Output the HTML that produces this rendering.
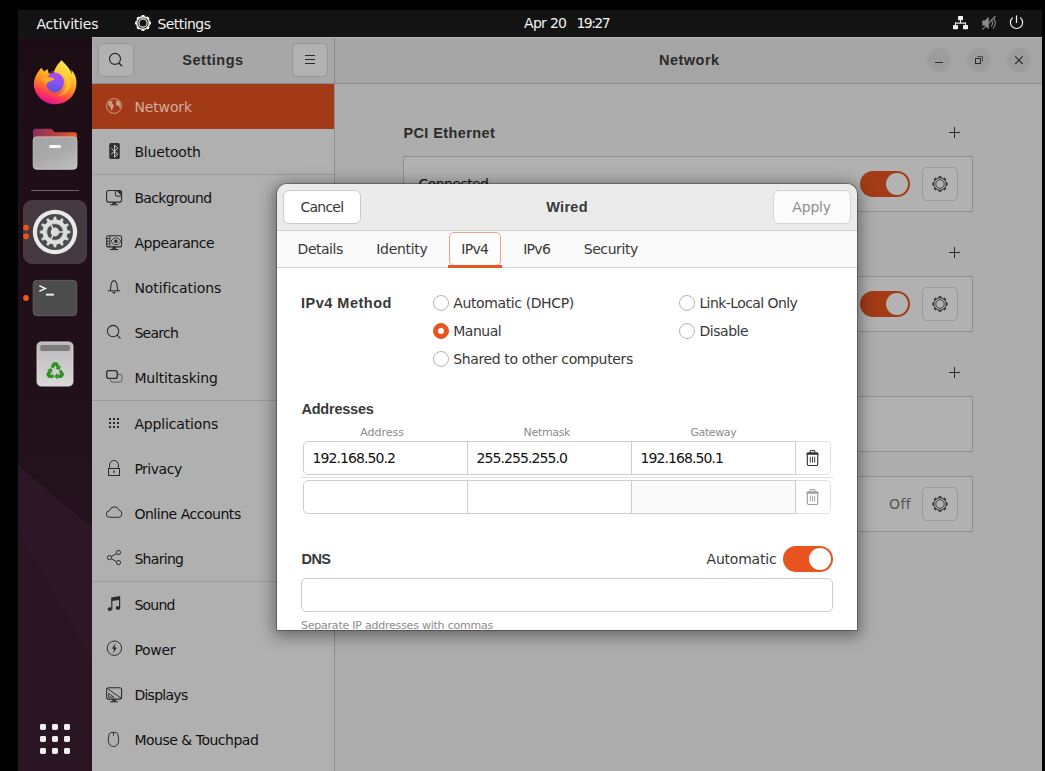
<!DOCTYPE html>
<html lang="en"><head><meta charset="utf-8"><title>Settings - Network</title>
<style>
.t{position:absolute;white-space:pre;line-height:1;font-family:"DejaVu Sans", "Liberation Sans", sans-serif;}
html,body{margin:0;padding:0;background:#000;}
body{width:1045px;height:771px;position:relative;overflow:hidden;font-family:"DejaVu Sans","Liberation Sans",sans-serif;}
.a{position:absolute;box-sizing:border-box;}
svg{position:absolute;overflow:visible;}
.topbar{left:18px;top:10px;width:1024px;height:27px;background:#131313;}
.dock{left:18px;top:37px;width:74px;height:734px;background:linear-gradient(180deg,#1c0d15 0%,#23111c 62%,#25121e 100%);}
.sbhead{left:92px;top:37px;width:242px;height:47px;background:#a7a7a7;border-bottom:1px solid #8b8b8b;}
.sidebar{left:92px;top:84px;width:242px;height:687px;background:#b0b0b0;}
.vdiv{left:334px;top:37px;width:1px;height:734px;background:linear-gradient(#878787 0,#878787 47px,#8f8f8f 47px);}
.mainhead{left:335px;top:37px;width:707px;height:47px;background:#a5a5a5;border-bottom:1px solid #8a8a8a;}
.content{left:335px;top:84px;width:707px;height:687px;background:#adadad;}
.sel{left:92px;top:84px;width:242px;height:45px;background:#a23a17;}
.sep{left:92px;width:242px;height:1px;background:#9c9c9c;}
.hbtn{background:#b2b2b2;border:1px solid #969696;border-radius:5px;}
.wbtn{width:24px;height:24px;border-radius:12px;background:#9d9d9d;top:48px;}
.box{left:403px;width:570px;height:56px;border:1px solid #909090;background:#b1b1b1;}
.gbtn{left:922px;width:36px;height:34px;border:1px solid #999;border-radius:5px;background:#b3b3b3;}
.sw{width:50px;height:26px;border-radius:13px;}
.sw.dim{background:#a33b16;left:860px;}
.sw i{position:absolute;right:2px;top:2px;width:22px;height:22px;border-radius:11px;}
.sw.dim i{background:#b3b3b3;}
.dialog{left:277px;top:184px;width:580px;height:446px;background:#fff;border-radius:10px 10px 0 0;box-shadow:0 3px 16px 3px rgba(0,0,0,.42),0 0 0 1px rgba(0,0,0,.28);overflow:hidden;}
.dhead{left:0;top:0;width:580px;height:47px;background:#ebebeb;border-bottom:1px solid #cfcfcf;}
.dtabs{left:0;top:47px;width:580px;height:37px;background:#fafafa;border-bottom:1px solid #d6d6d6;}
.dbtn{top:6px;height:34px;border:1px solid #c9c9c9;border-radius:6px;background:#fff;}
.tabsel{left:172px;top:48px;width:52px;height:34px;border:1px solid #f0a285;border-radius:5px;background:#fdfdfd;}
.tabline{left:171px;top:81px;width:54px;height:3px;background:#e95420;}
.radio{width:16px;height:16px;border-radius:8px;border:1px solid #b5b5b5;background:#fff;}
.radio.on{border-color:#e95420;background:#e95420;}
.radio.on:after{content:"";position:absolute;left:4.2px;top:4.2px;width:5.6px;height:5.6px;border-radius:3px;background:#fff;}
.entry{border:1px solid #cdcdcd;background:#fff;}
.dlgtext{left:0;top:0;width:1045px;height:630px;overflow:hidden;}
.hl{background:#b7b7b7;}
</style></head>
<body>
<div class="a topbar"></div>
<div class="a dock"></div>
<div class="a sbhead"></div>
<div class="a sidebar"></div>
<div class="a mainhead"></div>
<div class="a content"></div>
<div class="a vdiv"></div>
<div class="a hl" style="left:92px;top:37px;width:950px;height:1px"></div>
<div class="a" style="left:92px;top:38px;width:1px;height:45px;background:#aeaeae"></div>
<div class="a sel"></div>
<div class="a sep" style="top:174px"></div>
<div class="a sep" style="top:400px"></div>
<div class="a sep" style="top:581px"></div>
<div class="a hbtn" style="left:98px;top:43px;width:36px;height:34px"></div>
<div class="a hbtn" style="left:292px;top:43px;width:36px;height:34px"></div>
<div class="a wbtn" style="left:927px"></div>
<div class="a wbtn" style="left:967px"></div>
<div class="a wbtn" style="left:1007px"></div>
<div class="a box" style="top:156px"></div>
<div class="a box" style="top:276px"></div>
<div class="a box" style="top:396px"></div>
<div class="a box" style="top:476px"></div>
<div class="a gbtn" style="top:167px"></div>
<div class="a gbtn" style="top:287px"></div>
<div class="a gbtn" style="top:487px"></div>
<div class="a sw dim" style="top:171px"><i></i></div>
<div class="a sw dim" style="top:291px"><i></i></div>
<svg style="left:0;top:0" width="1045" height="771" viewBox="0 0 1045 771">
<defs>
<linearGradient id="ffg" x1="0.72" y1="0.05" x2="0.36" y2="1"><stop offset="0" stop-color="#fff36b"/><stop offset="0.28" stop-color="#ffc32e"/><stop offset="0.55" stop-color="#ff8a1f"/><stop offset="0.78" stop-color="#ff3f4f"/><stop offset="0.97" stop-color="#e7148f"/></linearGradient>
<linearGradient id="ffp" x1="0.6" y1="0" x2="0.4" y2="1"><stop offset="0" stop-color="#b545f0"/><stop offset="0.5" stop-color="#8a52f5"/><stop offset="1" stop-color="#5a55cc"/></linearGradient>
<linearGradient id="fob" x1="0" y1="0" x2="1" y2="0.25"><stop offset="0" stop-color="#8a2b5e"/><stop offset="0.55" stop-color="#b8403f"/><stop offset="1" stop-color="#e65f2b"/></linearGradient>
<linearGradient id="fof" x1="0.2" y1="0" x2="0.8" y2="1"><stop offset="0" stop-color="#a4a4a4"/><stop offset="0.5" stop-color="#a9a9a9"/><stop offset="1" stop-color="#bdbdbd"/></linearGradient>
<linearGradient id="trg" x1="0" y1="0" x2="0" y2="1"><stop offset="0" stop-color="#b9b9b9"/><stop offset="1" stop-color="#d9d9d9"/></linearGradient>
</defs>
<path d="M18,466L92,527V771H18z" fill="#2d1726"/><path d="M18,528L92,660V771H18z" fill="#2a1523"/>
<path d="M141.29,16.62 L141.73,15.00 L144.27,15.00 L144.71,16.62Z M146.30,17.28 L147.76,16.45 L149.55,18.24 L148.72,19.70Z M149.38,21.29 L151.00,21.73 L151.00,24.27 L149.38,24.71Z M148.72,26.30 L149.55,27.76 L147.76,29.55 L146.30,28.72Z M144.71,29.38 L144.27,31.00 L141.73,31.00 L141.29,29.38Z M139.70,28.72 L138.24,29.55 L136.45,27.76 L137.28,26.30Z M136.62,24.71 L135.00,24.27 L135.00,21.73 L136.62,21.29Z M137.28,19.70 L136.45,18.24 L138.24,16.45 L139.70,17.28Z " fill="#f4f4f4"/><circle cx="143" cy="23" r="6.3" fill="none" stroke="#f4f4f4" stroke-width="1.5"/><circle cx="143" cy="23" r="4.1" fill="none" stroke="#f4f4f4" stroke-width="1.1"/>
<g fill="#f6f6f6"><rect x="958" y="16" width="5" height="4.2" rx="0.6"/><rect x="953" y="25" width="5" height="4.2" rx="0.6"/><rect x="963" y="25" width="5" height="4.2" rx="0.6"/></g>
<path d="M960.5,20v3M955.5,25.2v-2.600M965.500,25.200v-2.600" stroke="#f6f6f6" stroke-width="1" fill="none"/><rect x="955" y="22.500" width="11" height="1.200" fill="#f6f6f6"/>
<g fill="#8a8a8a"><path d="M982.3,20.4h2.6l3.9,-3.7v12.6l-3.9,-3.7h-2.6z"/></g>
<path d="M991,19.6a4.6,4.6 0 0 1 0,6.8M993,17.6a7.6,7.6 0 0 1 0,10.8" stroke="#8a8a8a" stroke-width="1.1" fill="none"/>
<path d="M982.3,29.6L995.6,16.2" stroke="#8a8a8a" stroke-width="1.1" fill="none"/>
<path d="M1012.400,17.900a6.100,6.100 0 1 0 8.200,0" stroke="#f4f4f4" stroke-width="1.200" fill="none" stroke-linecap="round"/><path d="M1016.500,15.800v6.600" stroke="#f4f4f4" stroke-width="1.200" stroke-linecap="round"/>
<g transform="translate(25,50) scale(0.07782)">
<path d="M212,228 C175,270 118,340 114,430 C110,565 230,696 385,696 C545,696 664,572 661,420 C659,340 632,292 590,255 C600,275 603,292 600,308 C582,242 522,190 470,133 C438,170 395,215 376,274 L372,296 L330,308 L300,294 C300,276 296,260 290,243 C275,254 260,266 246,276 C232,262 220,246 212,228 Z" fill="url(#ffg)"/>
<ellipse cx="385" cy="416" rx="116" ry="130" fill="url(#ffp)"/>
<path d="M188,376 C225,338 305,328 388,372 C345,398 292,400 266,452 C262,420 232,392 188,376Z" fill="#ffa52a"/>
<path d="M300,294 C340,280 400,280 440,310 C470,330 490,345 498,345 C485,318 455,300 420,292 C470,290 520,330 530,400 C545,470 500,560 420,590 C520,590 600,500 590,400 C580,320 520,250 470,133 C438,170 395,215 376,274 C350,276 320,284 300,294Z" fill="#ffd23a" opacity="0.55"/>
</g>
<path d="M33,136v-4.2a3,3 0 0 1 3,-3h14.6a2,2 0 0 1 1.5,0.7l1.9,2a2,2 0 0 0 1.5,0.7h18.5a3,3 0 0 1 3,3v10h-44z" fill="url(#fob)"/>
<rect x="33.2" y="136.9" width="43.8" height="32.4" rx="3.6" fill="url(#fof)" stroke="#d2d2d2" stroke-width="0.8"/>
<rect x="49" y="145.1" width="12" height="3" rx="1.5" fill="#fafafa"/>
<rect x="31" y="190" width="48" height="1" fill="#6e646b"/>
<rect x="23" y="200" width="64" height="64" rx="9" fill="#463a41"/>
<circle cx="55" cy="232" r="22.2" fill="#e9e9e9"/><circle cx="55" cy="232" r="18" fill="#4b4b4b"/>
<path d="M53.72,219.87 L54.14,217.02 L55.86,217.02 L56.28,219.87 L59.96,220.85 L61.74,218.60 L63.24,219.46 L62.17,222.13 L64.87,224.83 L67.54,223.76 L68.40,225.26 L66.15,227.04 L67.13,230.72 L69.98,231.14 L69.98,232.86 L67.13,233.28 L66.15,236.96 L68.40,238.74 L67.54,240.24 L64.87,239.17 L62.17,241.87 L63.24,244.54 L61.74,245.40 L59.96,243.15 L56.28,244.13 L55.86,246.98 L54.14,246.98 L53.72,244.13 L50.04,243.15 L48.26,245.40 L46.76,244.54 L47.83,241.87 L45.13,239.17 L42.46,240.24 L41.60,238.74 L43.85,236.96 L42.87,233.28 L40.02,232.86 L40.02,231.14 L42.87,230.72 L43.85,227.04 L41.60,225.26 L42.46,223.76 L45.13,224.83 L47.83,222.13 L46.76,219.46 L48.26,218.60 L50.04,220.85Z M46.60,232.00 a8.4,8.4 0 1,0 16.8,0 a8.4,8.4 0 1,0 -16.8,0Z" fill="#dedede" fill-rule="evenodd" stroke="#dedede" stroke-width="0.8" stroke-linejoin="round"/>
<circle cx="55" cy="232" r="4.4" fill="#dcdcdc"/>
<path d="M55,232h8.6M55,232l-4.3,-7.45M55,232l-4.3,7.45" stroke="#dcdcdc" stroke-width="1.6" fill="none"/>
<circle cx="26" cy="227.6" r="2.9" fill="#e95420"/><circle cx="26" cy="236.3" r="2.9" fill="#e95420"/>
<rect x="33.2" y="280.3" width="43.6" height="35.4" rx="4" fill="#4c4c4c" stroke="#686868" stroke-width="0.8"/>
<path d="M39.3,285.6l6,2.9l-6,2.9" stroke="#f3f3f3" stroke-width="1.5" fill="none"/><rect x="46" y="293.7" width="8" height="1.9" fill="#f3f3f3"/>
<circle cx="26" cy="298" r="2.9" fill="#e95420"/>
<rect x="37" y="341.9" width="36" height="44.2" rx="4.2" fill="url(#trg)" stroke="#e2e2e2" stroke-width="0.8"/>
<rect x="40.2" y="345.1" width="29.8" height="5.9" rx="1.8" fill="#7c7c7c"/>
<path d="M51.91,367.70L54.13,363.85L56.27,363.85L58.16,367.13" fill="none" stroke="#2f8f22" stroke-width="3.3" stroke-linejoin="round"/><path d="M55.39,368.73L59.86,370.07L60.93,365.53Z" fill="#2f8f22"/><path d="M60.14,370.55L62.36,374.40L61.29,376.25L57.50,376.25" fill="none" stroke="#2f8f22" stroke-width="3.3" stroke-linejoin="round"/><path d="M57.50,373.05L54.10,376.25L57.50,379.45Z" fill="#2f8f22"/><path d="M53.55,376.25L49.11,376.25L48.04,374.40L49.93,371.12" fill="none" stroke="#2f8f22" stroke-width="3.3" stroke-linejoin="round"/><path d="M52.71,372.72L51.63,368.18L47.16,369.52Z" fill="#2f8f22"/>
<rect x="40" y="724" width="6" height="6" rx="1.4" fill="#f1f0f0"/>
<rect x="52" y="724" width="6" height="6" rx="1.4" fill="#f1f0f0"/>
<rect x="64" y="724" width="6" height="6" rx="1.4" fill="#f1f0f0"/>
<rect x="40" y="736" width="6" height="6" rx="1.4" fill="#f1f0f0"/>
<rect x="52" y="736" width="6" height="6" rx="1.4" fill="#f1f0f0"/>
<rect x="64" y="736" width="6" height="6" rx="1.4" fill="#f1f0f0"/>
<rect x="40" y="748" width="6" height="6" rx="1.4" fill="#f1f0f0"/>
<rect x="52" y="748" width="6" height="6" rx="1.4" fill="#f1f0f0"/>
<rect x="64" y="748" width="6" height="6" rx="1.4" fill="#f1f0f0"/>
<circle cx="115" cy="58.9" r="5.5" fill="none" stroke="#2b2b2b" stroke-width="1.15"/><path d="M118.9,63l3.3,3.2" stroke="#2b2b2b" stroke-width="1.5"/>
<path d="M305,55.5h10M305,59.5h10M305,63.5h10" stroke="#2b2b2b" stroke-width="1"/>
<path d="M935,62.5h8" stroke="#2b2b2b" stroke-width="1"/>
<rect x="975.5" y="58.5" width="5" height="5" fill="none" stroke="#2b2b2b" stroke-width="1"/><path d="M977.5,56.5h5v5" fill="none" stroke="#4a4a4a" stroke-width="1"/>
<path d="M1015.2,56.4l7.6,7.6M1022.8,56.4l-7.6,7.6" stroke="#2b2b2b" stroke-width="1.1"/>
<path d="M949.0,132.5h11M954.5,127.0v11" stroke="#262626" stroke-width="1" fill="none"/>
<path d="M949.0,252.5h11M954.5,247.0v11" stroke="#262626" stroke-width="1" fill="none"/>
<path d="M949.0,372.5h11M954.5,367.0v11" stroke="#262626" stroke-width="1" fill="none"/>
<path d="M938.21,177.75 L938.65,176.32 L941.35,176.32 L941.79,177.75Z M943.15,178.31 L944.47,177.61 L946.39,179.53 L945.69,180.85Z M946.25,182.21 L947.68,182.65 L947.68,185.35 L946.25,185.79Z M945.69,187.15 L946.39,188.47 L944.47,190.39 L943.15,189.69Z M941.79,190.25 L941.35,191.68 L938.65,191.68 L938.21,190.25Z M936.85,189.69 L935.53,190.39 L933.61,188.47 L934.31,187.15Z M933.75,185.79 L932.32,185.35 L932.32,182.65 L933.75,182.21Z M934.31,180.85 L933.61,179.53 L935.53,177.61 L936.85,178.31Z " fill="#2d2d2d"/><circle cx="940" cy="184" r="6.2" fill="none" stroke="#2d2d2d" stroke-width="1.0"/><circle cx="940" cy="184" r="4.2" fill="none" stroke="#2d2d2d" stroke-width="0.9"/>
<path d="M938.21,297.75 L938.65,296.32 L941.35,296.32 L941.79,297.75Z M943.15,298.31 L944.47,297.61 L946.39,299.53 L945.69,300.85Z M946.25,302.21 L947.68,302.65 L947.68,305.35 L946.25,305.79Z M945.69,307.15 L946.39,308.47 L944.47,310.39 L943.15,309.69Z M941.79,310.25 L941.35,311.68 L938.65,311.68 L938.21,310.25Z M936.85,309.69 L935.53,310.39 L933.61,308.47 L934.31,307.15Z M933.75,305.79 L932.32,305.35 L932.32,302.65 L933.75,302.21Z M934.31,300.85 L933.61,299.53 L935.53,297.61 L936.85,298.31Z " fill="#2d2d2d"/><circle cx="940" cy="304" r="6.2" fill="none" stroke="#2d2d2d" stroke-width="1.0"/><circle cx="940" cy="304" r="4.2" fill="none" stroke="#2d2d2d" stroke-width="0.9"/>
<path d="M938.21,497.75 L938.65,496.32 L941.35,496.32 L941.79,497.75Z M943.15,498.31 L944.47,497.61 L946.39,499.53 L945.69,500.85Z M946.25,502.21 L947.68,502.65 L947.68,505.35 L946.25,505.79Z M945.69,507.15 L946.39,508.47 L944.47,510.39 L943.15,509.69Z M941.79,510.25 L941.35,511.68 L938.65,511.68 L938.21,510.25Z M936.85,509.69 L935.53,510.39 L933.61,508.47 L934.31,507.15Z M933.75,505.79 L932.32,505.35 L932.32,502.65 L933.75,502.21Z M934.31,500.85 L933.61,499.53 L935.53,497.61 L936.85,498.31Z " fill="#2d2d2d"/><circle cx="940" cy="504" r="6.2" fill="none" stroke="#2d2d2d" stroke-width="1.0"/><circle cx="940" cy="504" r="4.2" fill="none" stroke="#2d2d2d" stroke-width="0.9"/>
<circle cx="114" cy="106" r="7.4" fill="none" stroke="#cb9c8c" stroke-width="1"/>
<path d="M109.3,101.2c1.2,-0.6 2.6,-0.2 3.4,0.5c-0.3,0.9 -1,1.2 -1.6,1.6c0.9,0.4 2.4,1 2.8,2.2c0.3,1.2 -0.9,2 -1.3,3c-0.3,0.9 -0.2,2 -0.9,2.6c-0.8,-1 -0.9,-2.6 -1.3,-3.8c-0.4,-1.2 -1.9,-1.6 -2.1,-2.8c-0.2,-1.4 0.3,-2.5 1,-3.300z M116.400,100.100c1.600,0.300 3.100,1.600 3.900,3.200c0.400,1.600 0.400,3.600 -0.300,5.100c-0.600,-0.900 -0.600,-2.200 -1.400,-2.900c-0.900,-0.500 -1.900,0.100 -2.600,-0.800c-0.600,-0.900 0.200,-1.700 0.500,-2.500c0.200,-0.700 -0.300,-1.400 -0.100,-2.100z" fill="#cb9c8c"/>
<rect x="109.2" y="143.1" width="10.6" height="16" rx="1.6" fill="#323232"/>
<path d="M111.300,148.200L117.700,154.200L114.600,157.200V145L117.700,148.200L111.300,154.200" stroke="#cfcfcf" stroke-width="1" fill="none" stroke-linejoin="miter"/>
<rect x="106.6" y="190.5" width="15" height="11.6" rx="2" fill="none" stroke="#2b2b2b" stroke-width="1.1"/><rect x="112.4" y="202.1" width="3.4" height="2.3" fill="#2b2b2b"/><rect x="110.2" y="204.2" width="7.8" height="1.1" fill="#2b2b2b"/>
<path d="M115.400,190.500v4.200a1.500,1.500 0 0 0 1.500,1.500h4.700" fill="none" stroke="#2b2b2b" stroke-width="1"/><path d="M116.6,191h3.400a1.400,1.400 0 0 1 1.400,1.400v3.100z" fill="#2b2b2b"/>
<rect x="106.6" y="235.7" width="15" height="11.2" rx="2" fill="none" stroke="#2b2b2b" stroke-width="1.1"/><rect x="112.4" y="246.89999999999998" width="3.4" height="2.3" fill="#2b2b2b"/><rect x="110.2" y="248.99999999999997" width="7.8" height="1.1" fill="#2b2b2b"/>
<path d="M109.9,235.800v11" stroke="#2b2b2b" stroke-width="0.9"/><path d="M107,238.500h2.900M107,241.200h2.900M107,243.900h2.900" stroke="#2b2b2b" stroke-width="0.9"/>
<path d="M110.900,241.300c1.600,-2.600 3.300,-3.400 5,-3.400s3.400,0.800 5,3.400c-1.600,2.600 -3.300,3.400 -5,3.400s-3.400,-0.800 -5,-3.400z" fill="none" stroke="#2b2b2b" stroke-width="0.9"/><circle cx="115.900" cy="241.300" r="1.700" fill="#2b2b2b"/>
<path d="M110.300,290.400c0.500,-2.200 0.300,-5.300 1.200,-7.500c0.500,-1.300 1.400,-2.300 2.500,-2.300s2,1 2.500,2.300c0.900,2.200 0.700,5.300 1.200,7.500" fill="none" stroke="#2b2b2b" stroke-width="1.1"/><path d="M107.900,290.800h12.200" stroke="#2b2b2b" stroke-width="1.1"/><path d="M112,292.100h4l-2,1.900z" fill="#2b2b2b"/>
<circle cx="113.100" cy="331.100" r="5.700" fill="none" stroke="#2b2b2b" stroke-width="1.1"/><path d="M117.200,335.200l3.300,3.400" stroke="#2b2b2b" stroke-width="1.2"/>
<path d="M117.800,374.300h2.200a2,2 0 0 1 2,2v3.800a2,2 0 0 1 -2,2h-7.600a2,2 0 0 1 -2,-2v-0.800" fill="none" stroke="#555" stroke-width="0.9"/>
<rect x="106.700" y="370.700" width="10.600" height="7.700" rx="2.200" fill="none" stroke="#2b2b2b" stroke-width="1.300"/>
<rect x="109" y="418" width="2" height="2" fill="#2b2b2b"/>
<rect x="113" y="418" width="2" height="2" fill="#2b2b2b"/>
<rect x="117" y="418" width="2" height="2" fill="#2b2b2b"/>
<rect x="109" y="422" width="2" height="2" fill="#2b2b2b"/>
<rect x="113" y="422" width="2" height="2" fill="#2b2b2b"/>
<rect x="117" y="422" width="2" height="2" fill="#2b2b2b"/>
<rect x="109" y="426" width="2" height="2" fill="#2b2b2b"/>
<rect x="113" y="426" width="2" height="2" fill="#2b2b2b"/>
<rect x="117" y="426" width="2" height="2" fill="#2b2b2b"/>
<rect x="108.500" y="468.500" width="11" height="7" fill="none" stroke="#2b2b2b" stroke-width="1"/><path d="M109.600,468.500v-3.600a4.400,4.400 0 0 1 8.800,0v3.600" fill="none" stroke="#2b2b2b" stroke-width="1"/><rect x="113.400" y="470.400" width="1.300" height="2.500" fill="#2b2b2b"/>
<path d="M109.800,517.300a3.300,3.300 0 0 1 -0.300,-6.600a5,5 0 0 1 9.600,-0.500a3.600,3.600 0 0 1 -0.500,7.100z" fill="none" stroke="#2b2b2b" stroke-width="1"/>
<circle cx="118.500" cy="552.500" r="2.100" fill="none" stroke="#2b2b2b" stroke-width="1"/><circle cx="109.400" cy="557.600" r="2.100" fill="none" stroke="#2b2b2b" stroke-width="1"/><circle cx="118.500" cy="562.600" r="2.100" fill="none" stroke="#2b2b2b" stroke-width="1"/><path d="M111.300,556.500l5.300,-3M111.300,558.700l5.300,3" stroke="#2b2b2b" stroke-width="1"/>
<path d="M111.200,597.500l9,-1.500v12h-1.200v-8.100l-6.600,1.100v8.300h-1.200z" fill="#2b2b2b"/><ellipse cx="109.800" cy="609.100" rx="2.200" ry="1.900" fill="#2b2b2b"/><ellipse cx="117.900" cy="607.900" rx="2.200" ry="1.900" fill="#2b2b2b"/>
<circle cx="114.400" cy="648.200" r="7.200" fill="none" stroke="#2b2b2b" stroke-width="1"/><path d="M115.500,643.300l-3.700,5.400h2.300l-0.900,4.500l3.700,-5.700h-2.300z" fill="#2b2b2b"/>
<rect x="106.6" y="687.8" width="15" height="11.3" rx="2" fill="none" stroke="#2b2b2b" stroke-width="1.1"/><rect x="112.4" y="699.0999999999999" width="3.4" height="2.3" fill="#2b2b2b"/><rect x="110.2" y="701.1999999999999" width="7.8" height="1.1" fill="#2b2b2b"/>
<path d="M107,688.200l14.300,10.200" stroke="#2b2b2b" stroke-width="1"/><path d="M108.700,693.300v3.800h5.200z" fill="none" stroke="#2b2b2b" stroke-width="0.9"/>
<path d="M113.500,732.300c2.300,0 3.900,0.300 4.200,1.500c0.700,2.800 1.200,5.400 0.900,7.700c-0.400,2.900 -2.400,5 -5.100,5s-4.700,-2.100 -5.100,-5c-0.300,-2.300 0.200,-4.900 0.900,-7.700c0.300,-1.200 1.900,-1.500 4.200,-1.500z" fill="none" stroke="#2b2b2b" stroke-width="1"/><path d="M113.500,732.500v3.300" stroke="#2b2b2b" stroke-width="1"/>
</svg>
<span class="t" style="left:36.5px;top:16.50px;font-size:14px;font-weight:400;color:#f2f2f2;letter-spacing:-0.208px;">Activities</span>
<span class="t" style="left:157.4px;top:16.50px;font-size:14px;font-weight:400;color:#f2f2f2;letter-spacing:-0.546px;">Settings</span>
<span class="t" style="left:524.1px;top:16.30px;font-size:14px;font-weight:400;color:#f2f2f2;letter-spacing:-0.717px;">Apr 20</span>
<span class="t" style="left:576.4px;top:16.30px;font-size:14px;font-weight:400;color:#f2f2f2;letter-spacing:-1.540px;">19:27</span>
<span class="t" style="left:182.3px;top:53.30px;font-size:14.5px;font-weight:700;color:#2b2b2b;letter-spacing:0.514px;font-family:'Liberation Sans','DejaVu Sans',sans-serif;">Settings</span>
<span class="t" style="left:658.9px;top:52.80px;font-size:14.5px;font-weight:700;color:#2b2b2b;letter-spacing:0.514px;font-family:'Liberation Sans','DejaVu Sans',sans-serif;">Network</span>
<span class="t" style="left:134.4px;top:99.60px;font-size:14px;font-weight:400;color:#d2ada0;letter-spacing:-0.128px;">Network</span>
<span class="t" style="left:134.4px;top:144.60px;font-size:14px;font-weight:400;color:#101010;letter-spacing:-0.184px;">Bluetooth</span>
<span class="t" style="left:134.4px;top:190.60px;font-size:14px;font-weight:400;color:#101010;letter-spacing:-0.637px;">Background</span>
<span class="t" style="left:134.4px;top:235.60px;font-size:14px;font-weight:400;color:#101010;letter-spacing:-0.418px;">Appearance</span>
<span class="t" style="left:134.4px;top:280.60px;font-size:14px;font-weight:400;color:#101010;letter-spacing:-0.052px;">Notifications</span>
<span class="t" style="left:134.4px;top:325.60px;font-size:14px;font-weight:400;color:#101010;letter-spacing:-0.722px;">Search</span>
<span class="t" style="left:134.4px;top:370.60px;font-size:14px;font-weight:400;color:#101010;letter-spacing:-0.168px;">Multitasking</span>
<span class="t" style="left:134.4px;top:416.60px;font-size:14px;font-weight:400;color:#101010;letter-spacing:-0.157px;">Applications</span>
<span class="t" style="left:134.4px;top:461.60px;font-size:14px;font-weight:400;color:#101010;letter-spacing:-0.484px;">Privacy</span>
<span class="t" style="left:134.4px;top:506.60px;font-size:14px;font-weight:400;color:#101010;letter-spacing:-0.474px;">Online Accounts</span>
<span class="t" style="left:134.4px;top:551.60px;font-size:14px;font-weight:400;color:#101010;letter-spacing:-0.692px;">Sharing</span>
<span class="t" style="left:134.4px;top:597.60px;font-size:14px;font-weight:400;color:#101010;letter-spacing:-0.773px;">Sound</span>
<span class="t" style="left:134.4px;top:642.60px;font-size:14px;font-weight:400;color:#101010;letter-spacing:-0.307px;">Power</span>
<span class="t" style="left:134.4px;top:687.60px;font-size:14px;font-weight:400;color:#101010;letter-spacing:-0.729px;">Displays</span>
<span class="t" style="left:134.4px;top:732.60px;font-size:14px;font-weight:400;color:#101010;letter-spacing:-0.492px;">Mouse &amp; Touchpad</span>
<span class="t" style="left:403.4px;top:126.10px;font-size:14.5px;font-weight:700;color:#2b2b2b;letter-spacing:0.399px;font-family:'Liberation Sans','DejaVu Sans',sans-serif;">PCI Ethernet</span>
<span class="t" style="left:418.6px;top:176.60px;font-size:14px;font-weight:400;color:#101010;letter-spacing:-0.636px;">Connected</span>
<span class="t" style="left:888.9px;top:496.70px;font-size:14px;font-weight:400;color:#555;letter-spacing:0.514px;">Off</span>
<div class="a dialog">
  <div class="a dhead"></div>
  <div class="a dtabs"></div>
  <div class="a dbtn" style="left:6px;width:78px"></div>
  <div class="a dbtn" style="left:496px;width:78px;background:#fbfbfb;border-color:#d4d4d4"></div>
  <div class="a tabsel"></div><div class="a tabline"></div>
  <div class="a radio" style="left:156px;top:111px"></div>
  <div class="a radio on" style="left:156px;top:139px"></div>
  <div class="a radio" style="left:156px;top:167px"></div>
  <div class="a radio" style="left:402px;top:111px"></div>
  <div class="a radio" style="left:402px;top:139px"></div>
  <!-- address rows -->
  <div class="a entry" style="left:518px;top:257px;width:36px;height:34px;border-radius:0 5px 5px 0;border-color:#e0e0e0"></div>
  <div class="a entry" style="left:26px;top:257px;width:493px;height:34px;border-radius:5px 0 0 5px"></div>
  <div class="a entry" style="left:518px;top:296px;width:36px;height:34px;border-radius:0 5px 5px 0;border-color:#e0e0e0"></div>
  <div class="a entry" style="left:26px;top:296px;width:493px;height:34px;border-radius:5px 0 0 5px"></div>
  <div class="a" style="left:190px;top:257px;width:1px;height:34px;background:#cdcdcd"></div>
  <div class="a" style="left:354px;top:257px;width:1px;height:34px;background:#cdcdcd"></div>
  <div class="a" style="left:518px;top:257px;width:1px;height:34px;background:#cdcdcd"></div>
  <div class="a" style="left:190px;top:296px;width:1px;height:34px;background:#cdcdcd"></div>
  <div class="a" style="left:354px;top:296px;width:1px;height:34px;background:#cdcdcd"></div>
  <div class="a" style="left:518px;top:296px;width:1px;height:34px;background:#cdcdcd"></div>
  <div class="a" style="left:355px;top:297px;width:163px;height:32px;background:#fafafa"></div>
  <div class="a" style="left:24px;top:293px;width:532px;height:1px;background:#e2e2e2"></div>
  <div class="a entry" style="left:24px;top:394px;width:532px;height:34px;border-radius:5px"></div>
  <div class="a sw" style="left:506px;top:362px;background:#e95420"><i style="background:#fff"></i></div>
</div>
<svg style="left:0;top:0" width="1045" height="771" viewBox="0 0 1045 771">
<path d="M805.800,454.7l1.700,-2.500h10l1.700,2.500z" fill="#2e2e2e"/><path d="M810.200,452.4v-1.800h4.600v1.800" fill="none" stroke="#2e2e2e" stroke-width="1"/><path d="M807.300,454.7v9.300a1.500,1.500 0 0 0 1.500,1.500h7.400a1.500,1.500 0 0 0 1.500,-1.500v-9.300" fill="none" stroke="#2e2e2e" stroke-width="1.100"/><path d="M810.300,456.7v5.800M812.500,456.7v5.800M814.700,456.7v5.800" stroke="#2e2e2e" stroke-width="0.900"/>
<path d="M805.800,493.7l1.700,-2.500h10l1.700,2.500z" fill="#9b9b9b"/><path d="M810.200,491.4v-1.800h4.600v1.800" fill="none" stroke="#9b9b9b" stroke-width="1"/><path d="M807.300,493.7v9.300a1.500,1.500 0 0 0 1.500,1.500h7.400a1.500,1.500 0 0 0 1.500,-1.500v-9.300" fill="none" stroke="#9b9b9b" stroke-width="1.100"/><path d="M810.300,495.7v5.800M812.500,495.7v5.800M814.700,495.7v5.800" stroke="#9b9b9b" stroke-width="0.900"/>
</svg>
<div class="a dlgtext">
<span class="t" style="left:300.4px;top:200.00px;font-size:14px;font-weight:400;color:#383838;letter-spacing:-0.747px;">Cancel</span>
<span class="t" style="left:546.2px;top:200.00px;font-size:14.5px;font-weight:700;color:#383838;letter-spacing:0.311px;font-family:'Liberation Sans','DejaVu Sans',sans-serif;">Wired</span>
<span class="t" style="left:792.3px;top:200.00px;font-size:14px;font-weight:400;color:#8e8e8e;letter-spacing:-0.183px;">Apply</span>
<span class="t" style="left:297.6px;top:242.00px;font-size:14px;font-weight:400;color:#383838;letter-spacing:-0.491px;">Details</span>
<span class="t" style="left:376.3px;top:242.00px;font-size:14px;font-weight:400;color:#383838;letter-spacing:-0.322px;">Identity</span>
<span class="t" style="left:461.2px;top:242.00px;font-size:14px;font-weight:400;color:#383838;letter-spacing:-0.655px;">IPv4</span>
<span class="t" style="left:523.2px;top:242.00px;font-size:14px;font-weight:400;color:#383838;letter-spacing:-0.722px;">IPv6</span>
<span class="t" style="left:583.7px;top:242.00px;font-size:14px;font-weight:400;color:#383838;letter-spacing:-0.414px;">Security</span>
<span class="t" style="left:301px;top:295.50px;font-size:14.5px;font-weight:700;color:#383838;letter-spacing:0.499px;font-family:'Liberation Sans','DejaVu Sans',sans-serif;">IPv4 Method</span>
<span class="t" style="left:453.2px;top:295.50px;font-size:14px;font-weight:400;color:#383838;letter-spacing:-0.380px;">Automatic (DHCP)</span>
<span class="t" style="left:453.2px;top:323.50px;font-size:14px;font-weight:400;color:#383838;letter-spacing:-0.475px;">Manual</span>
<span class="t" style="left:453.2px;top:351.50px;font-size:14px;font-weight:400;color:#383838;letter-spacing:-0.367px;">Shared to other computers</span>
<span class="t" style="left:699.4px;top:295.50px;font-size:14px;font-weight:400;color:#383838;letter-spacing:-0.574px;">Link-Local Only</span>
<span class="t" style="left:699.4px;top:323.50px;font-size:14px;font-weight:400;color:#383838;letter-spacing:-0.440px;">Disable</span>
<span class="t" style="left:301.5px;top:402.00px;font-size:14.5px;font-weight:700;color:#383838;letter-spacing:-0.232px;font-family:'Liberation Sans','DejaVu Sans',sans-serif;">Addresses</span>
<span class="t" style="left:360.2px;top:427.00px;font-size:11px;font-weight:400;color:#8b8b8b;letter-spacing:-0.002px;">Address</span>
<span class="t" style="left:523.6px;top:427.00px;font-size:11px;font-weight:400;color:#8b8b8b;letter-spacing:-0.329px;">Netmask</span>
<span class="t" style="left:690.4px;top:427.00px;font-size:11px;font-weight:400;color:#8b8b8b;letter-spacing:-0.382px;">Gateway</span>
<span class="t" style="left:312.5px;top:451.00px;font-size:14px;font-weight:400;color:#111;letter-spacing:-0.911px;">192.168.50.2</span>
<span class="t" style="left:476.5px;top:451.00px;font-size:14px;font-weight:400;color:#111;letter-spacing:-0.911px;">255.255.255.0</span>
<span class="t" style="left:640.5px;top:451.00px;font-size:14px;font-weight:400;color:#111;letter-spacing:-0.911px;">192.168.50.1</span>
<span class="t" style="left:301.5px;top:552.20px;font-size:14.5px;font-weight:700;color:#383838;letter-spacing:-0.562px;font-family:'Liberation Sans','DejaVu Sans',sans-serif;">DNS</span>
<span class="t" style="left:706.6px;top:552.00px;font-size:14px;font-weight:400;color:#383838;letter-spacing:-0.227px;">Automatic</span>
<span class="t" style="left:301px;top:619.50px;font-size:11px;font-weight:400;color:#8b8b8b;letter-spacing:-0.226px;">Separate IP addresses with commas</span>
</div>

</body></html>
